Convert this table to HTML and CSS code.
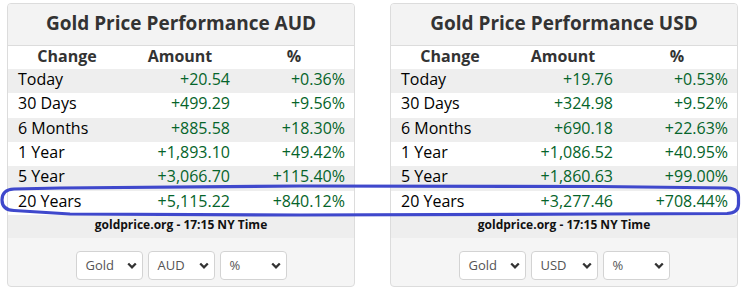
FILE: index.html
```html
<!DOCTYPE html>
<html>
<head>
<meta charset="utf-8">
<link rel="stylesheet" href="styles.css">
</head>
<body>
<div class="page">
  <div class="card">
    <div class="card-title">Gold Price Performance AUD</div>
    <table class="perf">
      <colgroup><col class="c1"><col class="c2"><col class="c3"></colgroup>
      <thead><tr><th>Change</th><th>Amount</th><th>%</th></tr></thead>
      <tbody>
        <tr class="alt"><td class="lbl">Today</td><td class="amt">+20.54</td><td class="pct">+0.36%</td></tr>
        <tr><td class="lbl">30 Days</td><td class="amt">+499.29</td><td class="pct">+9.56%</td></tr>
        <tr class="alt"><td class="lbl">6 Months</td><td class="amt">+885.58</td><td class="pct">+18.30%</td></tr>
        <tr><td class="lbl">1 Year</td><td class="amt">+1,893.10</td><td class="pct">+49.42%</td></tr>
        <tr class="alt"><td class="lbl">5 Year</td><td class="amt">+3,066.70</td><td class="pct">+115.40%</td></tr>
        <tr><td class="lbl">20 Years</td><td class="amt">+5,115.22</td><td class="pct">+840.12%</td></tr>
      </tbody>
    </table>
    <div class="source">goldprice.org - 17:15 NY Time</div>
    <div class="controls">
      <div class="sel">Gold<svg class="chev" viewBox="0 0 10 7"><path d="M1.2 1.5l3.8 3.8 3.8-3.8"/></svg></div>
      <div class="sel">AUD<svg class="chev" viewBox="0 0 10 7"><path d="M1.2 1.5l3.8 3.8 3.8-3.8"/></svg></div>
      <div class="sel">%<svg class="chev" viewBox="0 0 10 7"><path d="M1.2 1.5l3.8 3.8 3.8-3.8"/></svg></div>
    </div>
  </div>
  <div class="card">
    <div class="card-title">Gold Price Performance USD</div>
    <table class="perf">
      <colgroup><col class="c1"><col class="c2"><col class="c3"></colgroup>
      <thead><tr><th>Change</th><th>Amount</th><th>%</th></tr></thead>
      <tbody>
        <tr class="alt"><td class="lbl">Today</td><td class="amt">+19.76</td><td class="pct">+0.53%</td></tr>
        <tr><td class="lbl">30 Days</td><td class="amt">+324.98</td><td class="pct">+9.52%</td></tr>
        <tr class="alt"><td class="lbl">6 Months</td><td class="amt">+690.18</td><td class="pct">+22.63%</td></tr>
        <tr><td class="lbl">1 Year</td><td class="amt">+1,086.52</td><td class="pct">+40.95%</td></tr>
        <tr class="alt"><td class="lbl">5 Year</td><td class="amt">+1,860.63</td><td class="pct">+99.00%</td></tr>
        <tr><td class="lbl">20 Years</td><td class="amt">+3,277.46</td><td class="pct">+708.44%</td></tr>
      </tbody>
    </table>
    <div class="source">goldprice.org - 17:15 NY Time</div>
    <div class="controls">
      <div class="sel">Gold<svg class="chev" viewBox="0 0 10 7"><path d="M1.2 1.5l3.8 3.8 3.8-3.8"/></svg></div>
      <div class="sel">USD<svg class="chev" viewBox="0 0 10 7"><path d="M1.2 1.5l3.8 3.8 3.8-3.8"/></svg></div>
      <div class="sel">%<svg class="chev" viewBox="0 0 10 7"><path d="M1.2 1.5l3.8 3.8 3.8-3.8"/></svg></div>
    </div>
  </div>
  <svg class="annot" width="745" height="291" viewBox="0 0 745 291"><path d="M14 189 L60 188 L300 186 L600 186.5 L728 188 Q738.5 188.5 738.5 197 L738.5 204 Q738.5 213 727 213.5 L600 214 L300 215 L70 214 L14 210.5 Q2 210 2 200 Q2 189.5 14 189 Z"/></svg>
</div>
</body>
</html>
```
FILE: styles.css
```css
* { box-sizing: border-box; }
body {
  margin: 0;
  background: #fff;
  font-family: "Open Sans", "DejaVu Sans", sans-serif;
}
.page {
  position: relative;
  display: flex;
  gap: 35px;
  padding: 3px 0 0 7px;
}
.card {
  width: 348px;
  border: 1px solid #dcdcdc;
  border-radius: 4px;
  background: #f5f5f5;
  overflow: hidden;
}
.card-title {
  height: 42px;
  display: flex;
  align-items: center;
  justify-content: center;
  padding-bottom: 3px;
  font-weight: 700;
  font-size: 19px;
  color: #333;
  background: #f3f3f3;
  border-bottom: 1px solid #dcdcdc;
}
.perf {
  width: 100%;
  border-collapse: collapse;
  background: #fff;
  table-layout: fixed;
}
.c1 { width: 118px; }
.c2 { width: 108px; }
.c3 { width: 120px; }
.perf th {
  height: 23px;
  padding: 0;
  line-height: 20px;
  vertical-align: top;
  font-size: 16px;
  font-weight: 700;
  color: #333;
  text-align: center;
}
.perf td {
  height: 24.33px;
  padding: 0;
  line-height: 20px;
  vertical-align: top;
  font-size: 16px;
  font-weight: 500;
}
.perf tr.alt td { background: #eeeeee; }
.lbl { padding-left: 10px !important; color: #000; }
.amt { text-align: right; padding-right: 4px !important; color: #05642a; }
.pct { text-align: right; padding-right: 9px !important; color: #05642a; }
.source {
  height: 23px;
  background: #eeeeee;
  text-align: center;
  font-size: 12px;
  font-weight: 700;
  line-height: 20px;
  color: #111;
}
.controls {
  display: flex;
  justify-content: center;
  gap: 5px;
  padding: 13px 0 6px;
}
.sel {
  width: 67px;
  height: 29px;
  display: flex;
  align-items: center;
  justify-content: space-between;
  padding: 0 5px 0 9px;
  background: #fff;
  border: 1px solid #d3d3d3;
  border-radius: 4px;
  font-size: 13px;
  color: #555;
}
.chev {
  width: 10px;
  height: 7px;
  fill: none;
  stroke: #333;
  stroke-width: 2.3;
}
.annot {
  position: absolute;
  left: 0;
  top: 0;
  pointer-events: none;
}
.annot path {
  fill: none;
  stroke: #3f48cc;
  stroke-width: 3.2;
}
```
